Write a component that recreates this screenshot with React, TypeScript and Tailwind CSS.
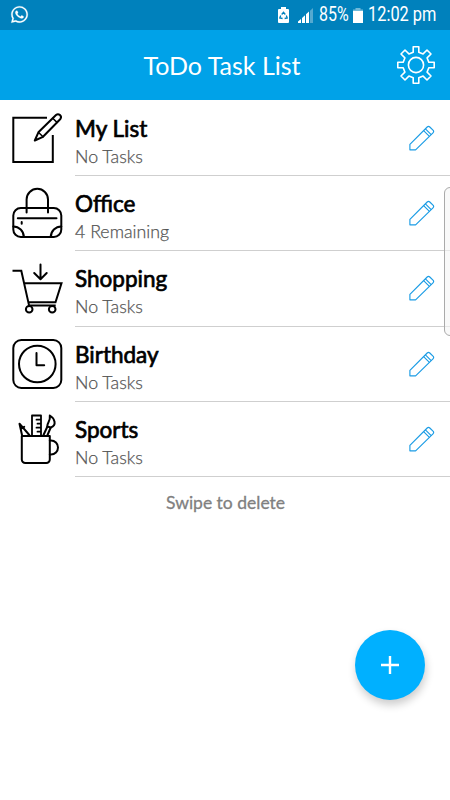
import type { ReactNode } from "react";
import { FaWhatsapp } from "react-icons/fa";

const ListIcon = ({ children }: { children: ReactNode }) => (
  <svg
    className="w-[50px] h-[50px] mb-px shrink-0 overflow-visible"
    viewBox="0 0 50 50"
    fill="none"
    stroke="black"
    strokeWidth="2"
    strokeLinecap="round"
    strokeLinejoin="round"
  >
    {children}
  </svg>
);

const NoteIcon = () => (
  <ListIcon>
    <path d="M35 4.8H1.3V49h39.5V22" strokeLinecap="butt" strokeLinejoin="miter" />
    <path d="M22.8 27.5l3.6-8.2L44 2a3 3 0 0 1 4.4 4L31 23.8z" />
    <path d="M26.6 19.5l4.4 4.2M40.7 5.2l4.3 4.2" strokeWidth="1.5" />
  </ListIcon>
);

const BagIcon = () => (
  <ListIcon>
    <rect x="1.3" y="20" width="48" height="29" rx="7.5" />
    <path d="M14.6 24.5V11.5a10.7 10.7 0 0 1 21.4 0v13" />
    <path d="M5.8 30.3h38.7M9.7 34v1.8M1.3 38.5A10.5 10.5 0 0 1 11.8 49M49.3 38.5A10.5 10.5 0 0 0 38.8 49" />
  </ListIcon>
);

const CartIcon = () => (
  <ListIcon>
    <path d="M1.5 7.8h7.8l7.8 34.8h25.6M12.5 20.2h37l-6 19h-27" strokeLinecap="square" strokeLinejoin="miter" />
    <path d="M28.5 1.5v14.3M22.2 10l6.3 6.3 6.2-6.3" />
    <circle cx="17.2" cy="46.3" r="3.3" />
    <circle cx="40.2" cy="46.3" r="3.3" />
  </ListIcon>
);

const ClockIcon = () => (
  <ListIcon>
    <rect x="1.3" y="1" width="48" height="48" rx="8" />
    <circle cx="25.3" cy="25" r="18.3" />
    <path d="M24.5 14v12.3h7.7" />
  </ListIcon>
);

const MugIcon = () => (
  <ListIcon>
    <path d="M9.8 22h28v23.5a3.5 3.5 0 0 1-3.5 3.5h-21a3.5 3.5 0 0 1-3.5-3.5z" />
    <path d="M37.8 26.5h1.2a7 7 0 0 1 0 14h-1.2" />
    <path d="M20 21V1.5h9V21M28.5 5.7h-4M28.5 9.7h-3M28.5 13.7h-4M28.5 17.7h-3" strokeWidth="1.8" />
    <path d="M10 21L7.5 9.7 17.3 21M8.8 14.8l3.4-2" />
    <path d="M31.5 21l3.7-8M35.5 21l3-7" />
    <path d="M35.2 12.5c-.3-3.8 3.6-5 2.6-11 5 3 7.3 9.7 1 12z" />
  </ListIcon>
);

const PencilIcon = () => (
  <svg className="w-[26px] h-[26px]" viewBox="0 0 26 26" fill="none" stroke="#1b9ce5" strokeWidth="1.15" strokeLinejoin="round">
    <path d="M.9 19.3L18.2 2q1.3-1.3 2.6 0l3.2 3.2q1.3 1.3 0 2.6L6.6 24.8H.9z" />
    <path d="M14.6 5.6l5.8 5.8M16.4 3.8l5.8 5.8" />
  </svg>
);

const GearIcon = () => (
  <svg className="w-[38px] h-[38px]" viewBox="-19 -19 38 38" fill="none" stroke="white" strokeWidth="1.6" strokeLinejoin="round">
    <path d="M-2.8-12.8V-18.2H2.8V-12.8L7.1-11.1 11-15 15-11 11.1-7.1 12.8-2.8H18.2V2.8H12.8L11.1 7.1 15 11 11 15 7.1 11.1 2.8 12.8V18.2H-2.8V12.8L-7.1 11.1-11 15-15 11-11.1 7.1-12.8 2.8H-18.2V-2.8H-12.8L-11.1-7.1-15-11-11-15-7.1-11.1z" />
    <circle r="7.6" />
  </svg>
);

const StatusBar = () => (
  <div className="h-[30px] bg-[#0081bc] flex items-center justify-between pl-[10px] pr-[13px] text-white">
    <FaWhatsapp className="w-[19px] h-[19px] mb-px" stroke="white" strokeWidth="6" />
    <div className="flex items-center">
      <svg className="w-[11px] h-[16px] mr-[9px]" viewBox="0 0 11 16">
        <path d="M3 0h5v2h2q1 0 1 1v12q0 1-1 1H1q-1 0-1-1V3q0-1 1-1h2z" fill="white" />
        <path d="M3.7 7.5l1.8-2.2 1.8 2.2M8.3 8.5l.9 2.5-2.6.5M4.6 11.5l-2.8-.5.9-2.5" fill="none" stroke="#0081bc" strokeWidth="1.3" />
      </svg>
      <svg className="w-[15px] h-[15px] mr-[6px]" viewBox="0 0 15 15">
        <path d="M0 15v-1.5L3 11v4zM4 15v-5l3-2.7V15zM8 15V6.3l3-2.8V15z" fill="white" />
        <path d="M12 15V2.7L15 0v15z" fill="#55a9d0" />
      </svg>
      <span className="font-[Roboto] text-[19.5px] leading-[30px] w-[34px] whitespace-nowrap">
        <span className="inline-block origin-left scale-x-[0.82]">85%</span>
      </span>
      <svg className="w-[10px] h-[15px] mr-[5px]" viewBox="0 0 10 15">
        <path d="M2.5 0h5v1.5H10V4H0V1.5h2.5z" fill="#70b9d9" />
        <path d="M0 3h10v12H0z" fill="white" />
      </svg>
      <span className="font-[Roboto] text-[19.5px] leading-[30px] w-[69px] whitespace-nowrap">
        <span className="inline-block origin-left scale-x-[0.84]">12:02 pm</span>
      </span>
    </div>
  </div>
);

const TaskRow = ({ icon, title, detail }: { icon: ReactNode; title: string; detail: string }) => (
  <div className="h-[75.35px] flex items-center pl-3">
    {icon}
    <div className="ml-[13px] h-full flex-1 flex items-center justify-between border-b border-[#cfcfcf] pr-[15px]">
      <div className="pt-[9px]">
        <h2 className="text-[22.5px] leading-[28px] text-black [-webkit-text-stroke:0.7px_black]">{title}</h2>
        <p className="text-[17.8px] leading-[27px] font-light text-[#555] [-webkit-text-stroke:0.25px_#555]">{detail}</p>
      </div>
      <PencilIcon />
    </div>
  </div>
);

const lists = [
  { title: "My List", detail: "No Tasks", icon: <NoteIcon /> },
  { title: "Office", detail: "4 Remaining", icon: <BagIcon /> },
  { title: "Shopping", detail: "No Tasks", icon: <CartIcon /> },
  { title: "Birthday", detail: "No Tasks", icon: <ClockIcon /> },
  { title: "Sports", detail: "No Tasks", icon: <MugIcon /> },
];

const App = () => {
  return (
    <div className="relative w-[450px] h-[800px] bg-white overflow-hidden font-[Lato,sans-serif]">
      <StatusBar />

      {/* Header */}
      <header className="h-[70px] bg-[#00a2e8] flex items-center pl-[47px] pr-[15px] text-white">
        <h1 className="flex-1 text-center text-[25px] leading-[32px]">ToDo Task List</h1>
        <button>
          <GearIcon />
        </button>
      </header>

      {/* Task lists */}
      <main className="pt-[0.5px]">
        {lists.map((list) => (
          <TaskRow key={list.title} {...list} />
        ))}
        <p className="mt-[13px] pl-px text-center text-[17.5px] leading-[26px] text-[#808080] [-webkit-text-stroke:0.3px_#808080]">Swipe to delete</p>
      </main>

      {/* Edge panel handle */}
      <div className="absolute right-[-6px] top-[187px] w-[12px] h-[149px] rounded-[6px] border border-[#aaa] bg-[#f5f5f5]/60" />

      <button className="absolute left-[355px] top-[630px] w-[70px] h-[70px] rounded-full bg-[#00b0ff] flex items-center justify-center shadow-[1px_5px_8px_rgba(0,0,0,0.2)]">
        <svg className="w-[18px] h-[18px]" viewBox="0 0 18 18" stroke="white" strokeWidth="2.4">
          <path d="M9 0v18M0 9h18" />
        </svg>
      </button>
    </div>
  );
};

export default App;
